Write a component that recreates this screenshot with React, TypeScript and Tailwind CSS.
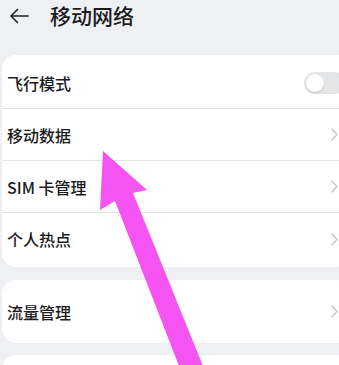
import { ReactNode } from "react";

const font = { fontFamily: '"Noto Sans CJK SC", "Noto Sans", sans-serif' };

function Chevron() {
  return (
    <svg width="7" height="13" viewBox="0 0 7 13" fill="none" className="shrink-0">
      <path d="M1 1l5 5.5L1 12" stroke="#c4c4c6" strokeWidth="1.3" strokeLinecap="round" strokeLinejoin="round" />
    </svg>
  );
}

function Toggle() {
  return (
    <div className="-mr-[8px] flex h-[22px] w-[42px] shrink-0 items-center rounded-full bg-[#e4e5e7] px-[2px]">
      <div className="h-[18px] w-[18px] rounded-full bg-white shadow-[0_1px_2px_rgba(0,0,0,0.15)]" />
    </div>
  );
}

function Row({ label, right, last }: { label: string; right: ReactNode; last?: boolean }) {
  return (
    <div className={"flex h-[52px] items-center justify-between pl-[5px] pr-[12px] " + (last ? "" : "border-b border-[#e3e4e6]")}>
      <span className="text-[16px] font-medium text-[#1c1c1e]">{label}</span>
      {right}
    </div>
  );
}

export default function App() {
  return (
    <div className="relative h-[365px] w-[339px] overflow-hidden bg-[#eef0f3]" style={font}>
      <div className="w-[350px]">
        {/* header */}
        <div className="flex h-[32px] items-center pl-[9px]">
          <svg width="20" height="16" viewBox="0 0 20 16" fill="none">
            <path d="M19 8H2M8.5 1.5L2 8l6.5 6.5" stroke="#222" strokeWidth="1.6" strokeLinecap="round" strokeLinejoin="round" />
          </svg>
          <span className="ml-[21px] text-[21px] font-medium text-[#1c1c1e]">移动网络</span>
        </div>

        <div className="ml-[2px] mt-[23px] rounded-[14px] bg-white py-[2px]">
          <Row label="飞行模式" right={<Toggle />} />
          <Row label="移动数据" right={<Chevron />} />
          <Row label="SIM 卡管理" right={<Chevron />} />
          <Row label="个人热点" right={<Chevron />} last />
        </div>

        <div className="ml-[2px] mt-[13px] flex h-[63px] items-center justify-between rounded-[14px] bg-white pl-[5px] pr-[12px]">
          <span className="text-[16px] font-medium text-[#1c1c1e]">流量管理</span>
          <Chevron />
        </div>

        <div className="ml-[2px] mt-[12px] h-[40px] rounded-[14px] bg-white" />
      </div>

      {/* annotation arrow */}
      <svg className="pointer-events-none absolute left-0 top-0" width="339" height="365" viewBox="0 0 339 365">
        <polygon
          points="103,151 100,210 115,201 179,366 203,366 133,193 147,190"
          fill="#f554f2"
        />
      </svg>
    </div>
  );
}
